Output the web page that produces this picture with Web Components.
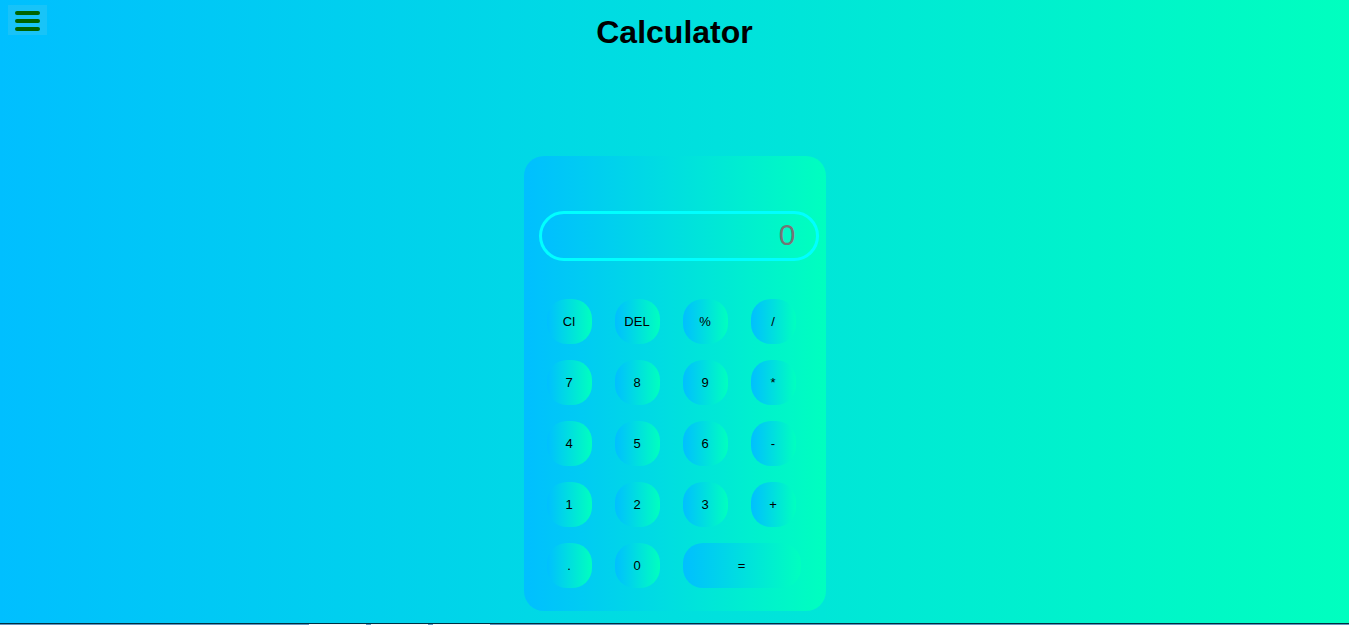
<!DOCTYPE html>
<html lang="en">
<head>
<meta charset="utf-8">
<title>Calculator</title>
<style>
html, body { height: 100%; }
body { margin: 0; font-family: "Liberation Sans", Arial, sans-serif; }
</style>
</head>
<body>
<calculator-page></calculator-page>
<script>
const GRADIENT = 'linear-gradient(to right, #00bfff, #00ffbf)';

class MenuButton extends HTMLElement {
  constructor() {
    super();
    this.attachShadow({ mode: 'open' }).innerHTML = `
      <style>
        :host { display: block; }
        button { display: flex; align-items: center; justify-content: center; box-sizing: border-box; width: 39px; height: 30px; padding: 2px 0 0; border: 0; background: rgba(60, 200, 240, 0.4); }
        svg { display: block; }
      </style>
      <button type="button" aria-label="Menu">
        <svg width="25" height="20" viewBox="0 0 25 20" fill="#006400">
          <rect width="25" height="4" rx="2"/><rect y="8" width="25" height="4" rx="2"/><rect y="16" width="25" height="4" rx="2"/>
        </svg>
      </button>`;
  }
}
customElements.define('menu-button', MenuButton);

class CalcKey extends HTMLElement {
  constructor() {
    super();
    this.attachShadow({ mode: 'open' }).innerHTML = `
      <style>
        :host { display: block; width: 45px; height: 45px; }
        :host([wide]) { width: 118px; }
        button { width: 100%; height: 100%; padding: 0; border: 0; border-radius: 20px; background: ${GRADIENT}; color: #000; font: 13px "Liberation Sans", Arial, sans-serif; }
      </style>
      <button type="button"><slot></slot></button>`;
  }
}
customElements.define('calc-key', CalcKey);

class CalcDisplay extends HTMLElement {
  constructor() {
    super();
    this.attachShadow({ mode: 'open' }).innerHTML = `
      <style>
        :host { display: block; }
        input { display: block; box-sizing: border-box; width: 100%; height: 50px; padding: 0 20px 2px; border: 3px solid #00ffff; border-radius: 25px; background: ${GRADIENT}; text-align: right; font: 30px "Liberation Sans", Arial, sans-serif; outline: 0; }
        input::placeholder { color: #757575; opacity: 1; }
      </style>
      <input type="text" placeholder="0" aria-label="Result" readonly>`;
  }
}
customElements.define('calc-display', CalcDisplay);

class CalcPad extends HTMLElement {
  constructor() {
    super();
    this.attachShadow({ mode: 'open' }).innerHTML = `
      <style>
        :host { display: block; box-sizing: border-box; width: 302px; padding: 55px 7px 23px 15px; border-radius: 20px; background: ${GRADIENT}; }
        .keys { display: grid; grid-template-columns: repeat(4, 45px); gap: 16px 23px; padding: 38px 0 0 8px; }
        calc-key[wide] { grid-column: span 2; }
      </style>
      <calc-display></calc-display>
      <div class="keys">
        <calc-key>Cl</calc-key><calc-key>DEL</calc-key><calc-key>%</calc-key><calc-key>/</calc-key>
        <calc-key>7</calc-key><calc-key>8</calc-key><calc-key>9</calc-key><calc-key>*</calc-key>
        <calc-key>4</calc-key><calc-key>5</calc-key><calc-key>6</calc-key><calc-key>-</calc-key>
        <calc-key>1</calc-key><calc-key>2</calc-key><calc-key>3</calc-key><calc-key>+</calc-key>
        <calc-key>.</calc-key><calc-key>0</calc-key><calc-key wide>=</calc-key>
      </div>`;
  }
}
customElements.define('calc-pad', CalcPad);

class TaskbarEdge extends HTMLElement {
  constructor() {
    super();
    this.attachShadow({ mode: 'open' }).innerHTML = `
      <style>
        :host { display: flex; gap: 5px; height: 1px; padding-left: 309px; border-top: 1px solid #003040; background: #6595bd; }
        i { width: 57px; background: #f4f8fc; }
      </style>
      <i></i><i></i><i></i>`;
  }
}
customElements.define('taskbar-edge', TaskbarEdge);

class CalculatorPage extends HTMLElement {
  constructor() {
    super();
    this.attachShadow({ mode: 'open' }).innerHTML = `
      <style>
        :host { display: flex; flex-direction: column; min-height: 100%; background: ${GRADIENT}; }
        header { display: grid; grid-template-columns: 1fr auto 1fr; align-items: start; padding: 5px 8px 0; }
        h1 { margin: 8px 0 0; font-size: 32px; line-height: 38px; }
        main { flex: 1; display: flex; justify-content: center; align-items: flex-start; padding: 105px 0 12px; }
      </style>
      <header><menu-button></menu-button><h1>Calculator</h1></header>
      <main><calc-pad></calc-pad></main>
      <taskbar-edge></taskbar-edge>`;
  }
}
customElements.define('calculator-page', CalculatorPage);
</script>
</body>
</html>
